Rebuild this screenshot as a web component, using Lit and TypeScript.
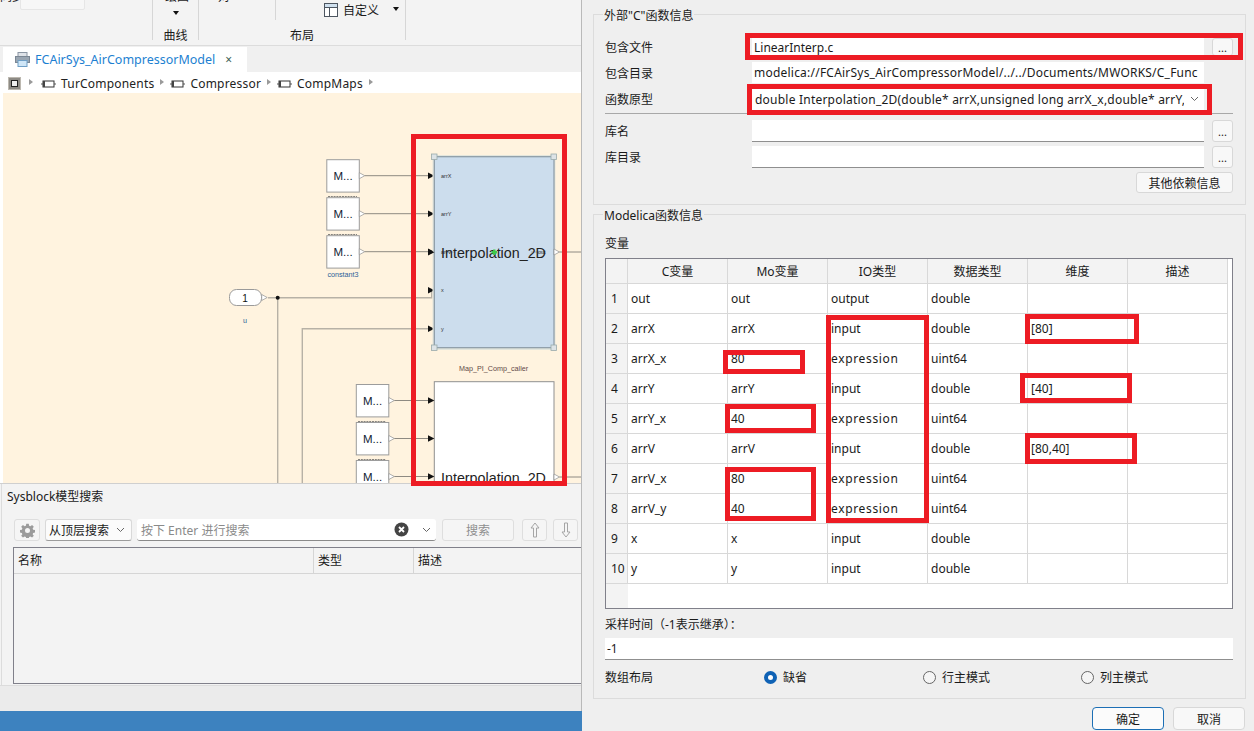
import { LitElement, html, css, svg } from "lit";
import { customElement } from "lit/decorators.js";

const rows: string[][] = [
  ["1", "out", "out", "output", "double", ""],
  ["2", "arrX", "arrX", "input", "double", "[80]"],
  ["3", "arrX_x", "80", "expression", "uint64", ""],
  ["4", "arrY", "arrY", "input", "double", "[40]"],
  ["5", "arrY_x", "40", "expression", "uint64", ""],
  ["6", "arrV", "arrV", "input", "double", "[80,40]"],
  ["7", "arrV_x", "80", "expression", "uint64", ""],
  ["8", "arrV_y", "40", "expression", "uint64", ""],
  ["9", "x", "x", "input", "double", ""],
  ["10", "y", "y", "input", "double", ""],
];

/* red annotation rectangles: x, y, w, h in page coordinates */
const marks = [
  [411, 134, 156, 352],
  [745, 33, 498, 27],
  [747, 84, 465, 31],
  [1025, 314, 114, 30],
  [826, 315, 103, 208],
  [723, 350, 82, 24],
  [1020, 373, 112, 30],
  [725, 404, 91, 29],
  [1025, 433, 112, 31],
  [725, 467, 91, 54],
];

const port = (x: number, y: number) =>
  svg`<path class="arrow" d="M${x} ${y - 3.2}L${x + 6.4} ${y}L${x} ${y + 3.2}Z"/>`;
const out = (x: number, y: number) =>
  svg`<path class="tri" d="M${x} ${y - 3}L${x + 5.5} ${y}L${x} ${y + 3}Z"/>`;
const constant = (x: number, y: number, lineTo: number) => svg`
  <rect class="box" x=${x} y=${y - 16} width="32.5" height="32.4"/>
  <text class="m" x=${x + 16.2} y=${y + 4.5} text-anchor="middle">M...</text>
  <line class="wire" x1=${x + 38} y1=${y} x2=${lineTo} y2=${y}/>
  ${out(x + 32.5, y)}${port(lineTo, y)}`;

const blockIcon = svg`<svg width="15" height="8" viewBox="0 0 15 8"><rect x="2" y="1" width="11" height="6" fill="#fff" stroke="#333" stroke-width="1"/><rect x="2" y="1" width="2" height="6" fill="#444"/><path d="M0 4h2M13 4h2" stroke="#555"/></svg>`;

const chev = svg`<svg width="9" height="6" viewBox="0 0 9 6"><path d="M1 1l3.500 3.500L8 1" fill="none" stroke="#666" stroke-width="1"/></svg>`;

@customElement("app-root")
export class AppRoot extends LitElement {
  static styles = css`
    :host { display: block; width: 1254px; height: 731px; overflow: hidden; position: relative; font-family: "Noto Sans", "Noto Sans CJK SC", sans-serif; font-size: 12px; color: #1a1a1a; background: #efefef; }
    * { box-sizing: border-box; }
    .page { display: grid; grid-template-columns: 582px 672px; height: 731px; }
    .left { display: flex; flex-direction: column; border-right: 1px solid #b9b9b9; background: #f3f3f3; min-width: 0; }

    .ribbon { height: 46px; flex: none; position: relative; background: #f3f3f3; border-bottom: 1px solid #dcdcdc; display: grid; grid-template-columns: 153px 46px 77px 130px 1fr; }
    .rsec { border-right: 1px solid #d6d6d6; height: 40px; position: relative; display: flex; flex-direction: column; align-items: center; justify-content: flex-end; line-height: 16px; }
    .rsec.short-sep { border-right-color: transparent; }
    .rsec.plain { border: 0; }
    .rlabel { margin-bottom: -4px; }
    .field { position: absolute; left: 20px; top: -3px; width: 65px; height: 13px; background: #f7f7f7; border: 1px solid #e6e6e6; border-radius: 2px; }
    .cut { position: absolute; left: 0; top: -9px; line-height: 12px; }
    .cut.c2 { left: 12px; }
    .cut.c3 { left: 19px; }
    .down { width: 0; height: 0; border-left: 3.5px solid transparent; border-right: 3.5px solid transparent; border-top: 4px solid #111; }
    .curve-arrow { position: absolute; left: 20px; top: 11px; }
    .custom { position: absolute; left: 324px; top: 2px; display: flex; align-items: center; gap: 5px; height: 16px; }
    .custom-arrow { position: absolute; left: 393px; top: 7px; }
    .seprow { position: absolute; left: 275px; top: 0; height: 20px; border-left: 1px solid #d6d6d6; }
    .layout-label { position: absolute; left: 290px; top: 28px; line-height: 16px; }

    .tabbar { height: 26px; flex: none; background: #f0f0f0; padding: 1px 0 0 3px; }
    .tab { width: 244px; height: 25px; background: #fff; display: flex; align-items: center; padding-left: 12px; gap: 5px; color: #1d7fd1; font-size: 12.5px; }
    .tab .x { color: #3e5f57; font-size: 12px; margin-left: 5px; }

    .crumbs { height: 21px; flex: none; background: #fff; display: flex; align-items: center; padding: 2px 0 0 8px; color: #222; letter-spacing: .2px; }
    .tri-r { width: 0; height: 0; border-top: 3.5px solid transparent; border-bottom: 3.5px solid transparent; border-left: 4px solid #9a9a9a; margin: 0 6px 4px 6px; }
    .tri-r.first { margin-left: 8px; margin-right: 8px; }
    .crumb { display: flex; align-items: center; gap: 5px; }

    .canvas { height: 391px; flex: none; display: flex; background: #fff; padding-left: 3px; border-bottom: 1px solid #cfcfcf; }
    .canvas svg { display: block; width: 578px; height: 390px; background: #fff3df; }
    .wire { stroke: #8e8a82; stroke-width: 1; fill: none; }
    .wire2 { stroke: #b7b1a6; stroke-width: 1.4; fill: none; }
    .arrow { fill: #111; }
    .tri { fill: #fff; stroke: #8f8f8f; stroke-width: .7; }
    .box { fill: #fff; stroke: #9c9c9c; stroke-width: 1; }
    .m { font-family: "Liberation Sans", sans-serif; font-size: 11.5px; fill: #123; }
    .big { font-family: "Liberation Sans", sans-serif; font-size: 14.3px; fill: #222; }
    .tiny { font-family: "Liberation Sans", sans-serif; font-size: 5.5px; fill: #333; }
    .cap { font-family: "Liberation Sans", sans-serif; font-size: 7.2px; fill: #5f4a48; }
    .blue { font-family: "Liberation Sans", sans-serif; font-size: 7.2px; fill: #2b5f99; }
    .one { font-family: "Liberation Sans", sans-serif; font-size: 10px; fill: #111; }
    .handle { fill: #dde3e6; stroke: #9aa; stroke-width: .8; }
    .halo { fill: #e3e6dd; }
    .sel { fill: #ccdded; stroke: #8a9aa5; stroke-width: 1.2; }
    .blk { fill: #fff; stroke: #8f8f8f; stroke-width: 1; }
    .pill { fill: #fff; stroke: #9a9a9a; }
    .dash { stroke: #666; stroke-width: .8; stroke-dasharray: 2 .8; }
    .strike { stroke: #6f7d88; stroke-width: .5; stroke-dasharray: 14 76 14; }
    .cross { stroke: #3fc94a; stroke-width: 2.4; }

    .search { flex: none; height: 201px; padding-top: 4px; margin-left: 1px; border-left: 1px solid #dcdcdc; display: flex; flex-direction: column; }
    .s-title { padding-left: 5px; height: 20px; line-height: 18px; }
    .s-tools { display: flex; align-items: stretch; height: 22px; margin: 11px 0 6px 12px; }
    .s-tools > * { flex: none; }
    .tbtn { background: #f5f5f5; border: 1px solid #dedede; border-radius: 3px; display: flex; align-items: center; justify-content: center; color: #9a9a9a; }
    .gear { width: 26px; margin-right: 5px; }
    .s-combo { width: 87px; background: #fbfbfb; border: 1px solid #d9d9d9; border-bottom-color: #9c9c9c; border-radius: 3px; display: flex; align-items: center; justify-content: space-between; padding: 0 6px 0 3px; margin-right: 5px; }
    .s-input { width: 299px; background: #fff; border-bottom: 1px solid #8a8a8a; border-radius: 3px; display: flex; align-items: center; padding: 0 5px 0 4px; color: #8a8a8a; margin-right: 6px; }
    .sp { flex: 1; }
    .cv { margin-left: 13px; display: flex; }
    .s-go { width: 72px; margin-right: 8px; color: #8f8f8f; }
    .s-up { width: 25px; margin-right: 6px; }
    .s-table { flex: 1; margin: 0 0 1px 11px; border: solid #80808a; border-width: 1px 0 1px 1px; background: #f3f3f3; }
    .s-head { display: grid; grid-template-columns: 300px 100px 1fr; height: 26px; border-bottom: 1px solid #d5d5d5; }
    .s-head div { border-right: 1px solid #d5d5d5; padding-left: 4px; line-height: 25px; }
    .s-head div:last-child { border-right: 0; }

    .graybar { height: 26px; flex: none; background: #ebebeb; border-top: 1px solid #dcdcdc; }
    .bluebar { height: 20px; flex: none; background: #3d82bf; margin-right: -1px; }

    .right { padding: 14px 8px 0 11px; display: flex; flex-direction: column; min-width: 0; }
    .group { border: 1px solid #dcdcdc; position: relative; }
    .legend { position: absolute; left: 9px; top: -7px; background: #efefef; padding: 0 1px; line-height: 16px; }
    .g1 { height: 191px; padding: 21px 12px 0 11px; flex: none; }
    .frow { display: grid; grid-template-columns: 147px 452px 8px 21px; align-items: stretch; }
    .frow label { display: flex; align-items: center; }
    .inp { background: #fff; display: flex; align-items: center; padding-left: 2px; white-space: nowrap; overflow: hidden; }
    .inp.line { border-bottom: 1px solid #8f8f8f; }
    .inp.long { letter-spacing: .22px; }
    .dots { grid-column: 4; background: #f8f8f8; border: 1px solid #d8d8d8; border-radius: 3px; display: flex; align-items: center; justify-content: center; font-size: 11px; line-height: 1; }
    .h17 { height: 17px; margin-top: 2px; }
    .r2 { height: 21px; margin-top: 7px; }
    .r3 { height: 22px; margin-top: 5px; }
    .combo { padding-left: 3px; justify-content: space-between; padding-right: 5px; }
    .combo span { overflow: hidden; width: 429px; }
    .sep { height: 1px; background: #a8a8a8; margin: 3px 0 6px; }
    .r4 { height: 22px; }
    .r5 { height: 22px; margin-top: 4px; }
    .more { display: flex; justify-content: flex-end; margin-top: 4px; }
    .more div { width: 97px; height: 21px; background: #f8f8f8; border: 1px solid #d8d8d8; border-radius: 3px; display: flex; align-items: center; justify-content: center; }

    .g2 { height: 485px; margin-top: 9px; padding: 21px 12px 0 11px; flex: none; }
    .vlabel { line-height: 16px; height: 16px; }
    .vtable { margin-top: 6px; height: 351px; border: 1px solid #80808a; background: #fff; position: relative; }
    .vgrid { display: grid; position: relative; grid-template-columns: 22px repeat(6, 100px); grid-template-rows: 25px; grid-auto-rows: 30px; }
    .c { border-right: 1px solid #d8d8d8; border-bottom: 1px solid #d8d8d8; padding-left: 3px; display: flex; align-items: center; white-space: nowrap; }
    .c.wide { letter-spacing: .65px; }
    .c.h { background: #f3f3f3; justify-content: center; padding: 0; }
    .c.n { background: #f3f3f3; padding-left: 5px; }
    .stub { position: absolute; left: 0; top: 325px; width: 22px; bottom: 0; background: #f3f3f3; }
    .samp { margin-top: 8px; line-height: 16px; height: 16px; }
    .sinp { margin-top: 5px; height: 22px; background: #fff; border-bottom: 1px solid #8f8f8f; padding-left: 2px; display: flex; align-items: center; }
    .radios { display: grid; grid-template-columns: 159px 159px 158px 1fr; margin-top: 8px; height: 18px; align-items: center; }
    .radio { display: flex; align-items: center; gap: 6px; }
    .dot { width: 13px; height: 13px; border-radius: 50%; border: 1px solid #666; background: #f5f5f5; flex: none; }
    .dot.on { border: 4px solid #0f62b5; background: #fff; }
    .foot { display: flex; justify-content: flex-end; gap: 9px; margin: 8px 1px 0 0; }
    .foot div { width: 72px; height: 23px; background: #f8f8f8; border: 1px solid #d8d8d8; border-radius: 4px; display: flex; align-items: center; justify-content: center; }
    .foot .pri { border-color: #1c6fb5; background: #fbfbfb; }

    .mark { position: absolute; border: 5px solid #ed1c24; pointer-events: none; }
  `;

  render() {
    return html`
      <div class="page">
        <section class="left">
          <div class="ribbon">
            <div class="rsec"><span class="cut">同步</span><div class="field"></div></div>
            <div class="rsec"><span class="cut c2">绘图</span><div class="down curve-arrow"></div><span class="rlabel">曲线</span></div>
            <div class="rsec short-sep"><span class="cut c3">对</span></div>
            <div class="rsec"></div>
            <div class="rsec plain"></div>
            <div class="seprow"></div>
            <div class="custom">
              <svg width="14" height="14" viewBox="0 0 14 14"><rect x=".5" y=".5" width="13" height="13" fill="#fff" stroke="#4c5560"/><rect x="1" y="1" width="12" height="3" fill="#cfe0ee"/><path d="M.5 4.500h13M5.500 4.500v9" stroke="#4c5560" fill="none"/></svg>
              <span>自定义</span>
            </div>
            <div class="down custom-arrow"></div>
            <span class="layout-label">布局</span>
          </div>
          <div class="tabbar">
            <div class="tab">
              <svg width="15" height="15" viewBox="0 0 15 15"><rect x="3" y="0.500" width="9" height="4" fill="#dfe3e8" stroke="#8b96a3"/><rect x=".5" y="4.500" width="14" height="6" fill="#9aa6b2" stroke="#7b8794"/><rect x="3" y="8.500" width="9" height="6" fill="#cfe6f7" stroke="#6f9fc6"/></svg>
              <span>FCAirSys_AirCompressorModel</span><span class="x">×</span>
            </div>
          </div>
          <div class="crumbs">
            <svg width="13" height="13" viewBox="0 0 13 13"><rect width="13" height="13" fill="#bcb8b0"/><rect x="1" y="1" width="11" height="11" fill="#8d8a84"/><rect x="3.500" y="3.500" width="6" height="6" fill="#eee" stroke="#222"/></svg>
            <div class="tri-r first"></div>
            <div class="crumb">${blockIcon}<span>TurComponents</span></div><div class="tri-r"></div>
            <div class="crumb">${blockIcon}<span>Compressor</span></div><div class="tri-r"></div>
            <div class="crumb">${blockIcon}<span>CompMaps</span></div><div class="tri-r"></div>
          </div>
          <div class="canvas">
            <svg viewBox="3 93 578 390">
              <path class="wire2" d="M277.700 297.700V484M302.300 484V328.700H428"/>
              <path class="wire2" d="M268 297.700H431.700V290.300"/>
              ${port(428, 290.3)}${port(428, 328.7)}
              <circle cx="277.700" cy="297.700" r="2" fill="#111"/>
              <rect class="pill" x="229.500" y="289.500" width="32" height="16" rx="7"/>
              <text class="one" x="245" y="301.500" text-anchor="middle">1</text>
              ${out(261.7, 297.5)}
              <text class="blue" x="245" y="323" text-anchor="middle">u</text>
              <path class="dash" d="M328 196.500h29M328 234.500h29M358 421.500h28M358 459.500h28"/>
              ${constant(326.8, 175.7, 428)}
              ${constant(326.8, 213.7, 428)}
              ${constant(326.8, 251.7, 428)}
              <text class="blue" x="343" y="277" text-anchor="middle">constant3</text>
              <rect class="halo" x="432.500" y="155" width="123" height="195"/>
              <rect class="sel" x="434.300" y="156.700" width="119.700" height="191"/>
              <rect class="handle" x="431.500" y="154" width="5.500" height="5.500"/><rect class="handle" x="551" y="154" width="5.500" height="5.500"/>
              <rect class="handle" x="431.500" y="345" width="5.500" height="5.500"/><rect class="handle" x="551" y="345" width="5.500" height="5.500"/>
              <text class="tiny" x="441" y="178">arrX</text><text class="tiny" x="441" y="216">arrY</text>
              <text class="tiny" x="441" y="254">arrV</text><text class="tiny" x="538" y="254">out</text>
              <text class="tiny" x="441" y="292">x</text><text class="tiny" x="441" y="331">y</text>
              <line class="strike" x1="441" y1="252" x2="545" y2="252"/>
              <text class="big" x="441" y="258">Interpolation_2D</text>
              <path class="cross" d="M494.300 249.500v5.500M491.500 252.300h5.500"/>
              ${port(428, 252.3)}${out(554, 252)}
              <line class="wire" x1="559.500" y1="252" x2="581" y2="252"/>
              <text class="cap" x="459" y="371">Map_PI_Comp_caller</text>
              <rect class="blk" x="434.300" y="381.700" width="119.700" height="120"/>
              <text class="big" x="441" y="482.500">Interpolation_2D</text>
              ${constant(356.3, 400.5, 428)}
              ${constant(356.3, 438.5, 428)}
              ${constant(356.3, 476.5, 428)}
              ${out(554, 477)}
              <line class="wire" x1="559.500" y1="477" x2="581" y2="477"/>
            </svg>
          </div>
          <div class="search">
            <div class="s-title">Sysblock模型搜索</div>
            <div class="s-tools">
              <div class="tbtn gear">
                <svg width="15" height="15" viewBox="0 0 24 24"><path fill="#9b9b9b" fill-rule="evenodd" d="M10 1h4l.6 3.200 2 .8 2.700-1.900 2.800 2.800-1.900 2.700.8 2 3 .6v4l-3 .6-.8 2 1.900 2.700-2.800 2.800-2.700-1.900-2 .8-.6 3h-4l-.6-3-2-.8-2.700 1.900-2.800-2.800 1.900-2.700-.8-2-3-.6v-4l3-.6.8-2L1.900 5.900 4.700 3.100l2.700 1.900 2-.8zM12 8a4 4 0 100 8 4 4 0 000-8z"/></svg>
              </div>
              <div class="s-combo"><span>从顶层搜索</span>${chev}</div>
              <div class="s-input">
                <span>按下 Enter 进行搜索</span><span class="sp"></span>
                <svg width="15" height="15" viewBox="0 0 15 15"><circle cx="7.500" cy="7.500" r="7" fill="#444"/><path d="M5 5l5 5M10 5l-5 5" stroke="#fff" stroke-width="1.800"/></svg>
                <span class="cv">${chev}</span>
              </div>
              <div class="tbtn s-go">搜索</div>
              <div class="tbtn s-up"><svg width="10" height="16" viewBox="0 0 10 16"><path d="M5 1L1 6h2.500v9h3V6H9z" fill="#f5f5f5" stroke="#a5a5a5"/></svg></div>
              <div class="tbtn s-up"><svg width="10" height="16" viewBox="0 0 10 16"><path d="M5 15L1 10h2.500V1h3v9H9z" fill="#f5f5f5" stroke="#a5a5a5"/></svg></div>
            </div>
            <div class="s-table">
              <div class="s-head"><div>名称</div><div>类型</div><div>描述</div></div>
            </div>
          </div>
          <div class="graybar"></div>
          <div class="bluebar"></div>
        </section>
        <section class="right">
          <div class="group g1">
            <span class="legend">外部"C"函数信息</span>
            <div class="frow h17"><label>包含文件</label><div class="inp">LinearInterp.c</div><div class="dots">...</div></div>
            <div class="frow r2"><label>包含目录</label><div class="inp long">modelica://FCAirSys_AirCompressorModel/../../Documents/MWORKS/C_Func</div></div>
            <div class="frow r3"><label>函数原型</label><div class="inp long combo"><span>double Interpolation_2D(double* arrX,unsigned long arrX_x,double* arrY,unsigned</span>${chev}</div></div>
            <div class="sep"></div>
            <div class="frow r4"><label>库名</label><div class="inp line"></div><div class="dots">...</div></div>
            <div class="frow r5"><label>库目录</label><div class="inp line"></div><div class="dots">...</div></div>
            <div class="more"><div>其他依赖信息</div></div>
          </div>
          <div class="group g2">
            <span class="legend">Modelica函数信息</span>
            <div class="vlabel">变量</div>
            <div class="vtable">
              <div class="stub"></div>
              <div class="vgrid">
                <div class="c h"></div>
                ${["C变量", "Mo变量", "IO类型", "数据类型", "维度", "描述"].map((t) => html`<div class="c h">${t}</div>`)}
                ${rows.map((r) => html`
                  <div class="c n">${r[0]}</div>
                  ${r.slice(1).map((t) => html`<div class="c ${t === "expression" ? "wide" : ""}">${t}</div>`)}
                  <div class="c"></div>`)}
              </div>
            </div>
            <div class="samp">采样时间（-1表示继承）：</div>
            <div class="sinp">-1</div>
            <div class="radios">
              <div>数组布局</div>
              <div class="radio"><span class="dot on"></span>缺省</div>
              <div class="radio"><span class="dot"></span>行主模式</div>
              <div class="radio"><span class="dot"></span>列主模式</div>
            </div>
          </div>
          <div class="foot"><div class="pri">确定</div><div>取消</div></div>
        </section>
      </div>
      ${marks.map((m) => html`<div class="mark" style="left:${m[0]}px;top:${m[1]}px;width:${m[2]}px;height:${m[3]}px"></div>`)}`;
  }
}
